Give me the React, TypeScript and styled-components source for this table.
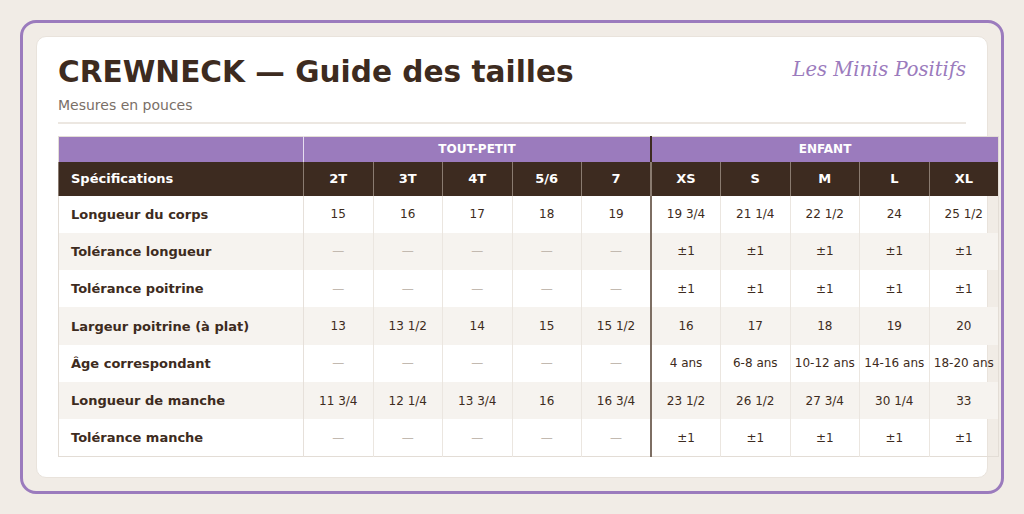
import React from "react";
import styled, { createGlobalStyle } from "styled-components";

const Global = createGlobalStyle`
  html, body { margin: 0; padding: 0; background: #f1ece6; }
  body { font-family: "DejaVu Sans", "Liberation Sans", sans-serif; color: #3d2b20; }
  * { box-sizing: border-box; }
`;

const Page = styled.div`
  width: 1024px;
  height: 514px;
  padding: 20px;
`;

const Frame = styled.div`
  height: 474px;
  border: 3px solid #9b7bbd;
  border-radius: 16px;
  padding: 13px;
`;

const Card = styled.div`
  height: 442px;
  background: #ffffff;
  border: 1px solid #e9e3dc;
  border-radius: 10px;
  padding: 17px 21px 0 21px;
`;

const Header = styled.div`
  display: flex;
  justify-content: space-between;
  align-items: flex-start;
  padding-bottom: 8px;
  border-bottom: 2px solid #ece7e1;
`;

const TitleBlock = styled.div`
  display: flex;
  flex-direction: column;
  gap: 6px;
`;

const Title = styled.h1`
  margin: 0;
  font-size: 29.6px;
  font-weight: 700;
  color: #3d2b20;
  line-height: 36px;
`;

const Subtitle = styled.div`
  font-size: 14px;
  color: #7a6f67;
  line-height: 18px;
`;

const Brand = styled.div`
  font-family: "DejaVu Serif", "Liberation Serif", serif;
  font-style: italic;
  font-size: 19.5px;
  color: #9b7bbd;
  padding-top: 4px;
`;

const Table = styled.table`
  margin-top: 12px;
  width: 940px;
  table-layout: fixed;
  border-collapse: collapse;
  border: 1px solid #e3ddd6;
`;

const GroupCell = styled.th<{ $divider?: "light" | "dark" }>`
  height: 25px;
  padding: 0;
  background: #9b7bbd;
  color: #ffffff;
  font-size: 12px;
  font-weight: 700;
  text-align: center;
  border-left: ${(p) =>
    p.$divider === "dark" ? "2px solid #3d2b20" : p.$divider === "light" ? "1px solid #e6def0" : "none"};
`;

const HeadCell = styled.th<{ $first?: boolean; $thick?: boolean }>`
  height: 34px;
  padding: 0 ${(p) => (p.$first ? "12px" : "0")};
  background: #3d2b20;
  color: #ffffff;
  font-size: 13px;
  font-weight: 700;
  text-align: ${(p) => (p.$first ? "left" : "center")};
  border-left: ${(p) => (p.$thick ? "2px solid #8a7b70" : "1px solid #8a7b70")};
`;

const Row = styled.tr<{ $striped: boolean }>`
  background: ${(p) => (p.$striped ? "#f6f3ef" : "transparent")};
`;

const LabelCell = styled.td`
  height: 37.3px;
  padding: 0 12px;
  font-size: 13px;
  font-weight: 700;
  color: #3d2b20;
  white-space: nowrap;
  border-right: 1px solid #e6e0da;
`;

const ValueCell = styled.td<{ $thick?: boolean; $empty?: boolean }>`
  height: 37.3px;
  padding: 0;
  text-align: center;
  font-size: 12px;
  white-space: nowrap;
  color: ${(p) => (p.$empty ? "#c2b9b0" : "#3d2b20")};
  border-left: ${(p) => (p.$thick ? "2px solid #7d6e63" : "1px solid #ebe6e0")};
`;

const sizes = ["2T", "3T", "4T", "5/6", "7", "XS", "S", "M", "L", "XL"];

const D = "—";
const rows: { label: string; values: string[] }[] = [
  { label: "Longueur du corps", values: ["15", "16", "17", "18", "19", "19 3/4", "21 1/4", "22 1/2", "24", "25 1/2"] },
  { label: "Tolérance longueur", values: [D, D, D, D, D, "±1", "±1", "±1", "±1", "±1"] },
  { label: "Tolérance poitrine", values: [D, D, D, D, D, "±1", "±1", "±1", "±1", "±1"] },
  { label: "Largeur poitrine (à plat)", values: ["13", "13 1/2", "14", "15", "15 1/2", "16", "17", "18", "19", "20"] },
  { label: "Âge correspondant", values: [D, D, D, D, D, "4 ans", "6-8 ans", "10-12 ans", "14-16 ans", "18-20 ans"] },
  { label: "Longueur de manche", values: ["11 3/4", "12 1/4", "13 3/4", "16", "16 3/4", "23 1/2", "26 1/2", "27 3/4", "30 1/4", "33"] },
  { label: "Tolérance manche", values: [D, D, D, D, D, "±1", "±1", "±1", "±1", "±1"] },
];

export default function App() {
  return (
    <>
      <Global />
      <Page>
        <Frame>
          <Card>
            <Header>
              <TitleBlock>
                <Title>CREWNECK — Guide des tailles</Title>
                <Subtitle>Mesures en pouces</Subtitle>
              </TitleBlock>
              <Brand>Les Minis Positifs</Brand>
            </Header>
            <Table>
              <colgroup>
                <col style={{ width: 245 }} />
                {sizes.map((s) => (
                  <col key={s} style={{ width: 69.5 }} />
                ))}
              </colgroup>
              <thead>
                <tr>
                  <GroupCell />
                  <GroupCell colSpan={5} $divider="light">TOUT-PETIT</GroupCell>
                  <GroupCell colSpan={5} $divider="dark">ENFANT</GroupCell>
                </tr>
                <tr>
                  <HeadCell $first>Spécifications</HeadCell>
                  {sizes.map((s, i) => (
                    <HeadCell key={s} $thick={i === 5}>
                      {s}
                    </HeadCell>
                  ))}
                </tr>
              </thead>
              <tbody>
                {rows.map((r, ri) => (
                  <Row key={r.label} $striped={ri % 2 === 1}>
                    <LabelCell>{r.label}</LabelCell>
                    {r.values.map((v, i) => (
                      <ValueCell key={i} $thick={i === 5} $empty={v === D}>
                        {v}
                      </ValueCell>
                    ))}
                  </Row>
                ))}
              </tbody>
            </Table>
          </Card>
        </Frame>
      </Page>
    </>
  );
}
